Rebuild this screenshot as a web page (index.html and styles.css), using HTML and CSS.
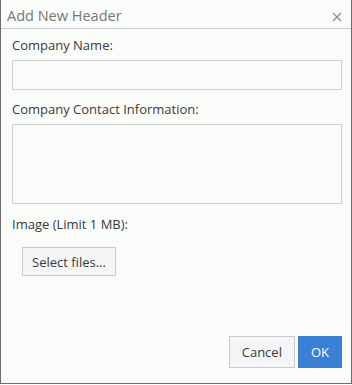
FILE: index.html
```html
<!DOCTYPE html>
<html>
<head>
<meta charset="utf-8">
<link rel="stylesheet" href="styles.css">
</head>
<body>
<div class="dialog">
  <div class="titlebar">
    <span class="title">Add New Header</span>
    <span class="close" aria-label="Close">
      <svg width="10" height="10" viewBox="0 0 10 10"><path d="M1 1L9 9M9 1L1 9" stroke="#8a8a8a" stroke-width="1.2"/></svg>
    </span>
  </div>
  <div class="content">
    <label class="label">Company Name:</label>
    <div class="input"></div>
    <label class="label">Company Contact Information:</label>
    <div class="textarea"></div>
    <label class="label">Image (Limit 1 MB):</label>
    <div class="upload"><button class="btn">Select files...</button></div>
  </div>
  <div class="actions">
    <button class="btn">Cancel</button>
    <button class="btn primary">OK</button>
  </div>
</div>
</body>
</html>
```
FILE: styles.css
```css
html, body {
  margin: 0;
  padding: 0;
  width: 352px;
  height: 385px;
  background: #fafcfa;
}
.dialog {
  box-sizing: border-box;
  width: 352px;
  height: 384px;
  border: 1px solid #6b6b6b;
  border-top: none;
  background: #fafcfa;
  display: flex;
  flex-direction: column;
  font-family: "Open Sans", sans-serif;
  font-size: 13px;
  color: #3a3a3a;
}
.titlebar {
  height: 29px;
  box-sizing: border-box;
  border-bottom: 1px solid #c9ccd4;
  display: flex;
  align-items: flex-start;
  justify-content: space-between;
  padding: 0 9px 0 6px;
}
.title {
  font-size: 14.5px;
  color: #777;
  line-height: 20px;
  padding-top: 6px;
}
.close {
  display: flex;
  width: 10px;
  height: 10px;
  margin-top: 12px;
}
.content {
  flex: 1;
  display: flex;
  flex-direction: column;
  padding: 6px 9px 0 11px;
}
.label {
  line-height: 20px;
  height: 20px;
  margin-bottom: 5px;
}
.input {
  height: 30px;
  box-sizing: border-box;
  border: 1px solid #cfd1cf;
  background: #fafcfa;
  margin-bottom: 9px;
}
.textarea {
  height: 80px;
  box-sizing: border-box;
  border: 1px solid #cfd1cf;
  background: #fafcfa;
  margin-bottom: 10px;
}
.label + .upload {
  margin-top: -5px;
}
.upload {
  padding: 13px 10px;
}
.btn {
  font-family: "Open Sans", sans-serif;
  font-size: 13px;
  color: #3a3a3a;
  background: #f5f4f6;
  border: 1px solid #c8cad0;
  height: 29px;
  padding: 0 9px;
  border-radius: 0;
}
.actions {
  display: flex;
  justify-content: flex-end;
  gap: 3px;
  padding: 0 9px 15px 0;
}
.actions .btn {
  height: 32px;
  padding: 0 12px;
}
.btn.primary {
  background: #3c80d6;
  border-color: #3c80d6;
  color: #fff;
  padding: 0 12px;
}
```
